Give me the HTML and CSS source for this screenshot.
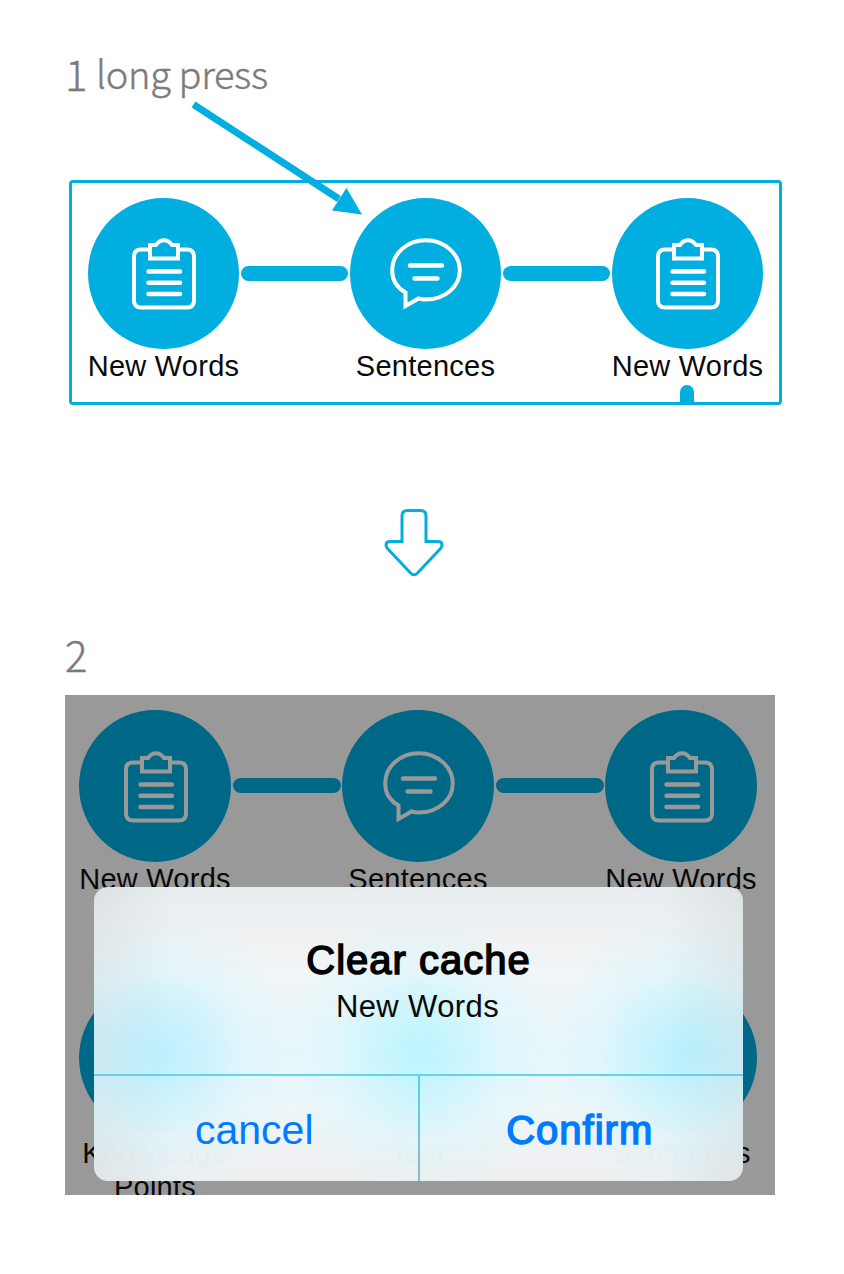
FILE: index.html
```html
<!DOCTYPE html>
<html lang="en">
<head>
<meta charset="utf-8">
<title>Clear cache</title>
<link rel="stylesheet" href="styles.css">
</head>
<body>
<svg class="symbols" aria-hidden="true">
  <symbol id="clipboard" viewBox="0 0 64 72">
    <g fill="none" stroke="currentColor" stroke-width="4" stroke-linecap="round">
      <path d="M16 11.500H9Q2 11.500 2 18.500V62.500Q2 69.500 9 69.500H55Q62 69.500 62 62.500V18.500Q62 11.500 55 11.500H48"/>
      <path stroke-linecap="butt" d="M18 7H24C26 4 28.500 2.200 32 2.200S38 4 40 7H46V20.500H18Z"/>
      <path stroke-width="4.500" d="M16.500 33.500H48M16.500 44.700H48M16.500 56H48"/>
    </g>
  </symbol>
  <symbol id="speech" viewBox="0 0 72 72">
    <g fill="none" stroke="currentColor" stroke-width="4" stroke-linecap="round">
      <path stroke-linecap="butt" d="M36 2.200C17 2.200 2.200 15.500 2.200 32.500C2.200 42 7.500 50 15.500 54.500V68L28.500 60.500C31 61.300 33.500 61.500 36 61.500C55 61.500 69.800 48.500 69.800 32.500S55 2.200 36 2.200Z"/>
      <path stroke-width="4.500" d="M20 27.500H52M24.500 40.500H47.500"/>
    </g>
  </symbol>
</svg>
<main class="guide">
  <h2 class="step"><span class="num">1</span><span class="caption">long press</span></h2>
  <section class="course">
    <div class="row">
      <div class="node"><div class="disc"><svg class="clip"><use href="#clipboard"/></svg></div><span>New Words</span></div>
      <i class="link"></i>
      <div class="node"><div class="disc"><svg class="talk"><use href="#speech"/></svg></div><span>Sentences</span></div>
      <i class="link"></i>
      <div class="node"><div class="disc"><svg class="clip"><use href="#clipboard"/></svg></div><span>New Words</span><i class="stub"></i></div>
    </div>
    <svg class="pointer" viewBox="0 0 172 116"><path d="M2.500 3.500L148 98" stroke="#00aee0" stroke-width="7"/><path d="M155.500 87L171 113.500L141 109.500Z" fill="#00aee0"/></svg>
  </section>
  <svg class="down" viewBox="0 0 60 70"><path d="M18 33.500V8Q18 2.500 23.500 2.500H36.500Q42 2.500 42 8V33.500H54Q58 33.500 58 37Q58 39 56.500 40.500L33.500 65Q30 68.500 26.500 65L3.500 40.500Q2 39 2 37Q2 33.500 6 33.500Z" fill="none" stroke="#00aee0" stroke-width="3"/></svg>
  <h2 class="step second"><span class="num">2</span></h2>
  <section class="dimmed">
    <div class="row">
      <div class="node"><div class="disc"><svg class="clip"><use href="#clipboard"/></svg></div><span>New Words</span></div>
      <i class="link"></i>
      <div class="node"><div class="disc"><svg class="talk"><use href="#speech"/></svg></div><span>Sentences</span></div>
      <i class="link"></i>
      <div class="node"><div class="disc"><svg class="clip"><use href="#clipboard"/></svg></div><span>New Words</span></div>
    </div>
    <div class="row lower">
      <div class="node"><div class="disc"></div><span>Knowledge<br>Points</span></div>
      <i class="link"></i>
      <div class="node"><div class="disc"></div><span>Text</span></div>
      <i class="link"></i>
      <div class="node"><div class="disc"></div><span>Sentences</span></div>
    </div>
    <div class="alert">
      <div class="message"><h3>Clear cache</h3><p>New Words</p></div>
      <div class="actions"><button class="cancel">cancel</button><button class="confirm">Confirm</button></div>
    </div>
  </section>
</main>
</body>
</html>
```
FILE: styles.css
```css
* { box-sizing: border-box; }
body { margin: 0; background: #fff; font-family: "Liberation Sans", Arial, sans-serif; }
.symbols { position: absolute; width: 0; height: 0; }
.guide { width: 844px; height: 1274px; padding: 43px 62px 0 65px; overflow: hidden; }
.step { display: flex; align-items: flex-start; height: 137px; margin: 0; color: #7b7b7b; font: 300 38px/60px "Noto Sans CJK SC", sans-serif; white-space: nowrap; -webkit-text-stroke: .4px #7b7b7b; }
.num { width: 31px; font-size: 42px; }
.caption { letter-spacing: -.35px; }

.course { position: relative; width: 713px; height: 225px; margin-left: 4px; padding: 15px 0 0 16px; border: 3px solid #00aee0; border-radius: 4px; color: #0a0a0a; }
.row { --c: #00aee0; display: flex; align-items: flex-start; }
.node { display: flex; flex-direction: column; align-items: center; width: 151px; flex: none; text-align: center; }
.disc { display: flex; width: 151px; height: 151px; flex: none; align-items: center; justify-content: center; border-radius: 50%; background: var(--c); color: #fff; }
.clip { width: 64px; height: 72px; margin-left: 1px; margin-top: 1px; }
.talk { width: 72px; height: 72px; margin-left: 1px; margin-top: 1px; }
.node span { margin-top: 1px; font-size: 29px; line-height: 33px; letter-spacing: .25px; white-space: nowrap; }
.link { width: 107px; height: 15px; margin: 68px 2px 0; flex: none; border-radius: 8px; background: var(--c); }
.stub { width: 14px; height: 17px; margin-top: 2px; margin-right: 1px; border-radius: 7px 7px 0 0; background: var(--c); }
.pointer { position: absolute; left: 119px; top: -82px; width: 172px; height: 116px; }
.down { display: block; width: 60px; height: 70px; margin: 103px 0 0 319px; }
.second { height: 71px; margin-top: 46px; }
.second .num { width: auto; }

.dimmed { position: relative; width: 710px; height: 500px; padding: 15px 14px 0; overflow: hidden; background: #999; color: #080808; }
.dimmed .row { --c: #006887; }
.dimmed .node { width: 152px; }
.dimmed .disc { width: 152px; height: 152px; color: #999; }
.dimmed .link { width: 108px; margin-left: 1.5px; margin-right: 1.5px; }
.dimmed .lower { margin-top: 86px; }
.dimmed .lower span { margin-top: 2px; line-height: 34px; }
.dimmed .lower .link { visibility: hidden; }
.alert { position: absolute; left: 29px; top: 192px; width: 649px; height: 294px; overflow: hidden; border-radius: 14px;
  background:
    radial-gradient(circle at 66px 166px, #bcf1ffff 0, #c2f2ffc0 40px, #d0f5ff60 85px, #d8f7ff00 140px),
    radial-gradient(circle at 326px 166px, #bcf5ffff 0, #c2f6ffc0 40px, #d0f7ff60 85px, #d8f7ff00 140px),
    radial-gradient(circle at 590px 166px, #b8f1ffff 0, #c0f3ffc0 40px, #d0f5ff60 85px, #d8f7ff00 140px),
    linear-gradient(#e4f9ff00 20%, #e2f8ffa0 58%, #e4f9ff00 95%),
    linear-gradient(#e9eef0f9, #f6f7f7f9 30%, #f6f7f7f9 75%, #eef1f2f9); }
.alert::after { content: ""; position: absolute; inset: 0; pointer-events: none; background: linear-gradient(90deg, #8a9da020, #8a9da000 12%, #8a9da000 88%, #8a9da020); }
.message { height: 189px; padding-top: 50px; border-bottom: 2px solid #62d5ee; text-align: center; }
.message h3 { margin: 0; font-size: 40px; font-weight: 400; line-height: 46px; letter-spacing: 1px; color: #000; -webkit-text-stroke: 1.5px #000; }
.message p { margin: 5px 0 0; padding-right: 2px; font-size: 31px; line-height: 38px; letter-spacing: .4px; }
.actions { display: flex; height: 105px; }
.actions button { width: 324px; padding: 0 3px 0 0; border: 0; background: none; color: #007aff; font: 41px/108px "Liberation Sans", Arial, sans-serif; }
.actions .cancel { border-right: 2px solid; border-image: linear-gradient(#48d6f7, #8fb9c2) 1; width: 326px; }
.actions .confirm { font-size: 40px; letter-spacing: 1px; -webkit-text-stroke: 1.5px #007aff; }
```
